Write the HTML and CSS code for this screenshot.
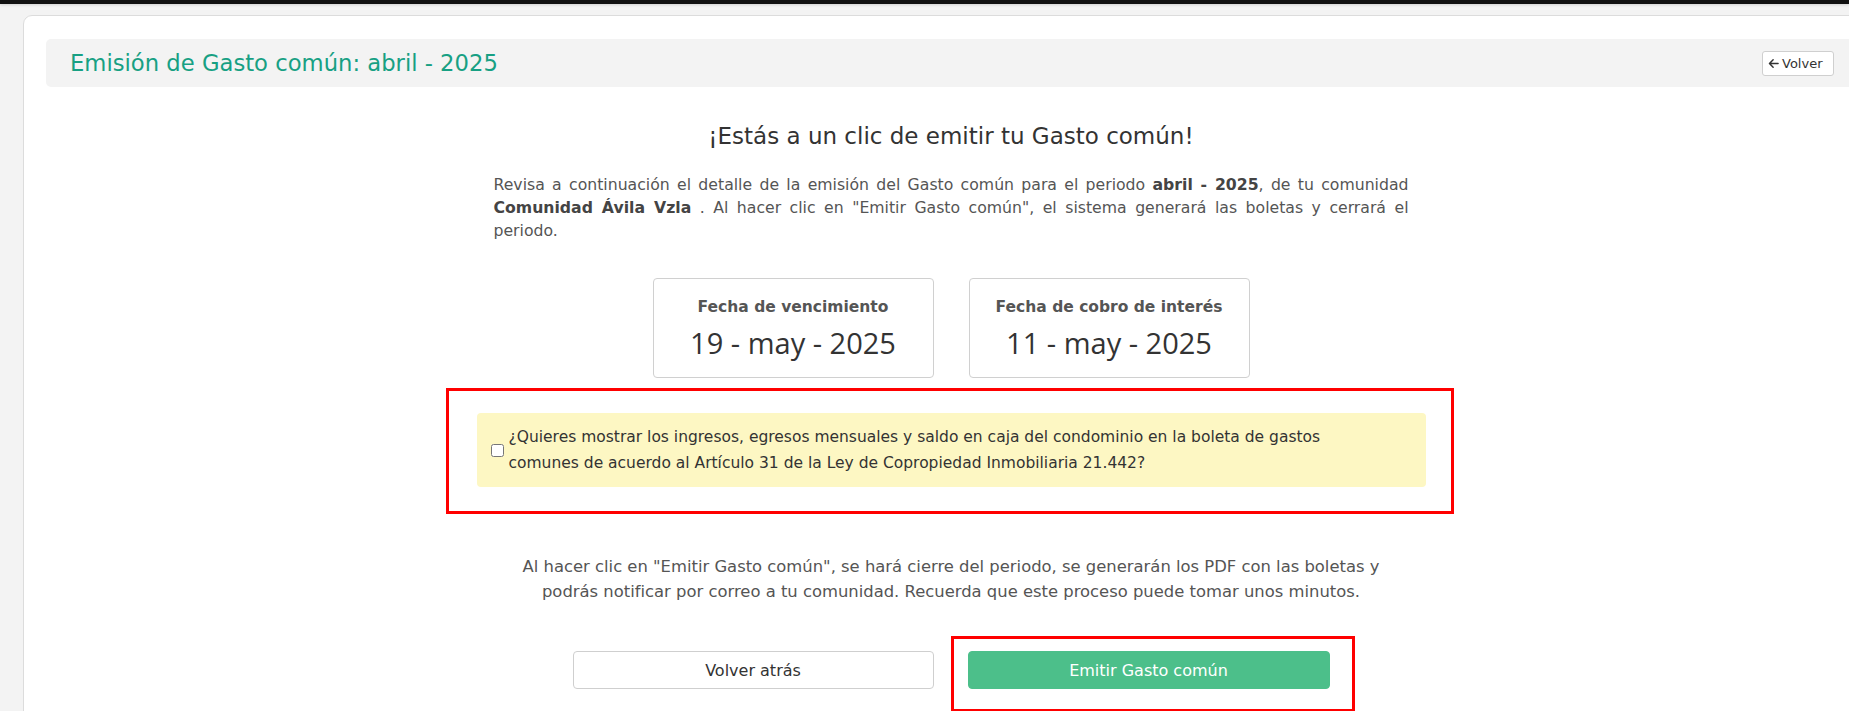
FILE: index.html
```html
<!DOCTYPE html>
<html lang="es">
<head>
<meta charset="utf-8">
<title>Emisión de Gasto común</title>
<link rel="stylesheet" href="styles.css">
</head>
<body>
<div class="topbar"></div>
<div class="card">
  <div class="card-header">
    <h1 class="title">Emisión de Gasto común: abril - 2025</h1>
    <button class="back-btn"><svg class="arrow" viewBox="0 0 12 12" width="11" height="11"><path d="M11 6H1.8M5.6 2 1.6 6l4 4" fill="none" stroke="#333" stroke-width="1.6" stroke-linecap="round" stroke-linejoin="round"/></svg>Volver</button>
  </div>
  <div class="content">
    <h2 class="heading">¡Estás a un clic de emitir tu Gasto común!</h2>
    <p class="intro">Revisa a continuación el detalle de la emisión del Gasto común para el periodo <b>abril - 2025</b>, de tu comunidad <b>Comunidad Ávila Vzla</b> . Al hacer clic en "Emitir Gasto común", el sistema generará las boletas y cerrará el periodo.</p>
    <div class="dates">
      <div class="date-box">
        <div class="date-label">Fecha de vencimiento</div>
        <div class="date-value">19 - may - 2025</div>
      </div>
      <div class="date-box">
        <div class="date-label">Fecha de cobro de interés</div>
        <div class="date-value">11 - may - 2025</div>
      </div>
    </div>
    <div class="highlight highlight-alert">
      <label class="alert">
        <input type="checkbox" class="check">
        <span class="alert-text">¿Quieres mostrar los ingresos, egresos mensuales y saldo en caja del condominio en la boleta de gastos comunes de acuerdo al Artículo 31 de la Ley de Copropiedad Inmobiliaria 21.442?</span>
      </label>
    </div>
    <p class="note">Al hacer clic en "Emitir Gasto común", se hará cierre del periodo, se generarán los PDF con las boletas y podrás notificar por correo a tu comunidad. Recuerda que este proceso puede tomar unos minutos.</p>
    <div class="actions">
      <button class="btn btn-outline">Volver atrás</button>
      <div class="highlight highlight-btn">
        <button class="btn btn-primary">Emitir Gasto común</button>
      </div>
    </div>
  </div>
</div>
</body>
</html>
```

FILE: styles.css
```css
html, body {
  margin: 0;
  padding: 0;
}
body {
  background: #f3f3f3;
  font-family: "DejaVu Sans", "Open Sans", sans-serif;
  color: #333;
  overflow: hidden;
  height: 711px;
}
.topbar {
  height: 4px;
  background: #111;
  box-shadow: 0 1px 3px rgba(0,0,0,0.15);
}
.card {
  margin: 11px 0 0 23px;
  width: 1856px;
  height: 800px;
  background: #fff;
  border: 1px solid #dcdcdc;
  border-radius: 9px;
  box-sizing: border-box;
  padding: 23px 22px 0 22px;
}
.card-header {
  height: 48px;
  background: #f3f3f3;
  border-radius: 5px;
  display: flex;
  align-items: center;
  justify-content: space-between;
  padding: 0 22px 0 24px;
}
.title {
  margin: 0;
  font-size: 22.7px;
  font-weight: 400;
  color: #17a083;
}
.back-btn {
  display: flex;
  align-items: center;
  gap: 3px;
  height: 25px;
  width: 72px;
  padding: 0 5px;
  background: #fff;
  border: 1px solid #cfcfcf;
  border-radius: 3px;
  font-family: inherit;
  font-size: 13px;
  color: #333;
  box-sizing: border-box;
}
.content {
  width: 915px;
  margin: 0 auto;
  padding-top: 36px;
}
.heading {
  margin: 0;
  text-align: center;
  font-size: 23px;
  font-weight: 400;
  color: #333;
  line-height: 26px;
}
.intro {
  margin: 24px 0 0;
  font-size: 15.7px;
  line-height: 23px;
  color: #555;
  text-align: justify;
}
.intro b {
  color: #444;
}
.dates {
  display: flex;
  justify-content: center;
  gap: 35px;
  margin-top: 36px;
}
.date-box {
  width: 281px;
  height: 100px;
  box-sizing: border-box;
  border: 1px solid #d0d0d0;
  border-radius: 4px;
  display: flex;
  flex-direction: column;
  align-items: center;
  padding-top: 18px;
}
.date-label {
  font-size: 15.5px;
  font-weight: 700;
  color: #555;
  line-height: 21px;
}
.date-value {
  margin-top: 7px;
  font-family: "Open Sans", sans-serif;
  font-size: 29px;
  color: #333;
  line-height: 36px;
}
.highlight {
  border: 3px solid #f00;
  box-sizing: border-box;
}
.highlight-alert {
  width: 1008px;
  margin: 10px 0 0 -48px;
  padding: 22px 25px 24px 28px;
}
.alert {
  display: flex;
  align-items: center;
  background: #fdf7c3;
  border-radius: 4px;
  padding: 11px 14px 11px 14px;
  font-size: 15.5px;
  line-height: 26px;
  color: #333;
}
.alert-text {
  max-width: 850px;
}
.check {
  width: 13px;
  height: 13px;
  margin: 0 5px 0 0;
  flex: none;
}
.note {
  margin: 40px 0 0;
  padding: 0 20px;
  text-align: center;
  font-size: 16.4px;
  line-height: 25px;
  color: #555;
}
.actions {
  display: flex;
  align-items: flex-start;
  margin-top: 32px;
  padding-left: 79px;
}
.btn {
  height: 38px;
  width: 361px;
  border-radius: 4px;
  font-family: inherit;
  font-size: 16px;
  box-sizing: border-box;
}
.btn-outline {
  background: #fff;
  border: 1px solid #cfcfcf;
  color: #333;
  margin-top: 15px;
}
.highlight-btn {
  margin-left: 17px;
  padding: 12px 22px 20px 14px;
}
.btn-primary {
  background: #4cbf8a;
  border: 1px solid #4cbf8a;
  color: #fff;
  width: 362px;
}
```
